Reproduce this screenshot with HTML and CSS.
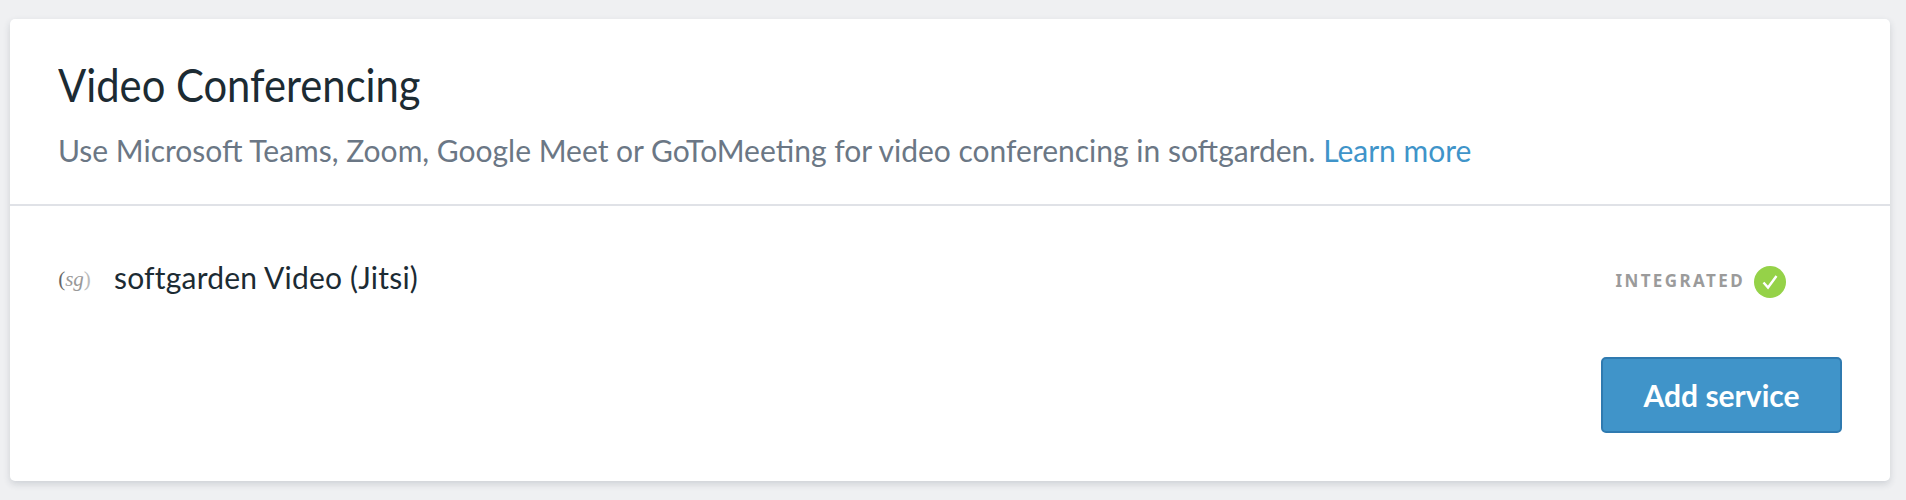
FILE: index.html
```html
<!DOCTYPE html>
<html lang="en">
  <head>
    <meta charset="UTF-8" />
    <title>Video Conferencing</title>
    <link rel="stylesheet" href="styles.css">
  </head>
  <body>
    <div class="card">
      <div class="card-header">
        <h1>Video Conferencing</h1>
        <p class="intro">Use Microsoft Teams, Zoom, Google Meet or GoToMeeting for video conferencing in softgarden. <a href="#">Learn more</a></p>
      </div>
      <div class="card-body">
        <div class="service">
          <div class="service-name">
            <span class="logo"><span class="logo-left">(</span><span class="logo-sg">sg</span><span class="logo-right">)</span></span>
            <span class="service-title">softgarden Video (Jitsi)</span>
          </div>
          <div class="status">
            <span class="status-label">INTEGRATED</span>
            <svg class="status-icon" width="32" height="32" viewBox="0 0 32 32">
              <circle cx="16" cy="16" r="16" fill="#95d248" />
              <path d="M9.5 16.5l4.5 5L22.5 10" fill="none" stroke="#fff" stroke-width="2.4" />
            </svg>
          </div>
        </div>
        <div class="actions">
          <button type="button" class="btn">Add service</button>
        </div>
      </div>
    </div>
  </body>
</html>
```

FILE: styles.css
```css
* {
  box-sizing: border-box;
}

html,
body {
  margin: 0;
  padding: 0;
}

body {
  background: #eff0f2;
  padding: 19px 16px 0 10px;
  height: 500px;
  overflow: hidden;
  font-family: "Lato", "Noto Sans", sans-serif;
  color: #1c2b33;
}

.card {
  background: #fff;
  border-radius: 5px;
  box-shadow: 0 3px 7px rgba(40, 50, 70, 0.16);
  height: 462px;
}

.card-header {
  height: 187px;
  padding: 36px 48px 0;
  border-bottom: 2px solid #e0e2e7;
}

/* the original heading font is narrower than anything installed */
h1 {
  margin: 0;
  font-size: 46px;
  font-weight: 400;
  line-height: 60px;
  transform: scaleX(0.907);
  transform-origin: left center;
}

.intro {
  margin: 15px 0 0;
  font-size: 30px;
  line-height: 40px;
  color: #6b7785;
}

.intro a {
  color: #3f94c9;
  text-decoration: none;
}

.card-body {
  padding: 53px 48px 0;
}

.service {
  display: flex;
  justify-content: space-between;
  align-items: center;
  padding-right: 56px;
}

.service-name {
  display: flex;
  align-items: center;
  gap: 23px;
  padding-bottom: 10px;
  line-height: 36px;
}

.service-title {
  font-size: 30px;
  letter-spacing: 0.2px;
}

.logo {
  width: 33px;
  padding-top: 3px;
  font-family: "Liberation Serif", serif;
  font-size: 21px;
  line-height: 30px;
  text-align: center;
  color: #999;
}

.logo-sg {
  font-style: italic;
}

.logo-left {
  color: #666;
}

.logo-right {
  color: #bbb;
}

.status {
  display: flex;
  align-items: center;
  gap: 9px;
}

.status-label {
  padding-bottom: 3px;
  font-family: "Noto Sans", sans-serif;
  font-size: 17px;
  font-weight: 700;
  letter-spacing: 2.4px;
  color: #9b9b9b;
}

.actions {
  display: flex;
  justify-content: flex-end;
  margin-top: 52px;
}

.btn {
  width: 241px;
  height: 76px;
  background: #4094c9;
  border: 2px solid #2f7ab0;
  border-radius: 5px;
  color: #fff;
  font-family: inherit;
  font-size: 30px;
  font-weight: 700;
}
```
